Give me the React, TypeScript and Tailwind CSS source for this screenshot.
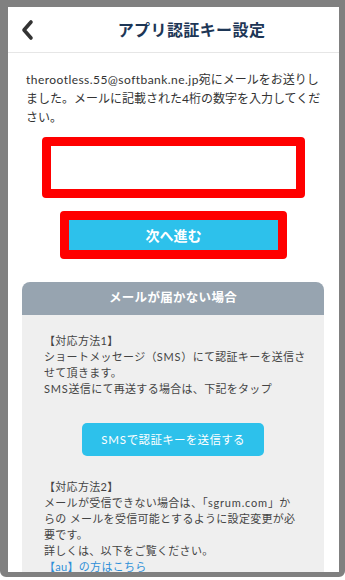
import React from "react";

const font = { fontFamily: '"Lato", "Noto Sans CJK JP", sans-serif' };

export default function App() {
  return (
    <div className="w-[345px] h-[580px] bg-white overflow-hidden" style={font}>
      <div className="h-[577px] border-t-[7px] border-l-[8px] border-r-[6px] border-b-[5px] border-[#808080] rounded-b-[6px] overflow-hidden flex flex-col bg-white">
        <div className="h-[46px] shrink-0 flex items-center border-b border-[#e6e6e6]">
          <div className="w-[38px] flex justify-center">
            <svg width="14" height="22" viewBox="0 0 14 22">
              <path d="M11 3 L4 11 L11 19" fill="none" stroke="#333" strokeWidth="3.6" strokeLinecap="round" strokeLinejoin="round" />
            </svg>
          </div>
          <div className="flex-1 text-center text-[16px] font-bold text-[#1d3656] tracking-[0.4px] pr-[2px]">
            アプリ認証キー設定
          </div>
        </div>
        <div className="flex-1 flex flex-col">
          <div className="pt-[17px] pl-[18px] text-[12px] leading-[19px] text-[#333]">
            <div className="whitespace-nowrap">
              <span className="tracking-[0.45px]">therootless.55@softbank.ne.jp</span>宛にメールをお送りし
            </div>
            <div className="whitespace-nowrap">ました。メールに記載された4桁の数字を入力してくだ</div>
            <div className="whitespace-nowrap">さい。</div>
          </div>
          <div className="mt-[10px] mx-auto w-[263px] h-[61px] border-[9px] border-[#ff0000] rounded-[4px] bg-white" />
          <div className="mt-[13px] mx-auto w-[227px] h-[48px] border-[9px] border-[#ff0000] rounded-[4px]">
            <div className="w-full h-full bg-[#2dc1eb] flex items-center justify-center text-white font-bold text-[14px]">
              次へ進む
            </div>
          </div>
          <div className="mt-[23px] ml-[14px] w-[302px] flex-1 flex flex-col">
            <div className="h-[33px] shrink-0 rounded-t-[8px] bg-[#97a4b0] flex items-center justify-center text-white font-bold text-[12.5px] tracking-[0.3px]">
              メールが届かない場合
            </div>
            <div className="flex-1 bg-[#efefef] px-[22px] pt-[18px] text-[11px] leading-[16px] text-[#444] tracking-[0.3px]">
              <div className="whitespace-nowrap">【対応方法1】</div>
              <div className="whitespace-nowrap">ショートメッセージ（<span className="tracking-[0.8px]">SMS</span>）にて認証キーを送信さ</div>
              <div className="whitespace-nowrap">せて頂きます。</div>
              <div className="whitespace-nowrap"><span className="tracking-[0.8px]">SMS</span>送信にて再送する場合は、下記をタップ</div>
              <div className="mt-[26px] mx-auto w-[182px] h-[33px] rounded-[5px] bg-[#2dc1eb] flex items-center justify-center text-white text-[11.5px] tracking-[0.3px]">
                <span className="tracking-[0.8px]">SMS</span>で認証キーを送信する
              </div>
              <div className="mt-[23px] whitespace-nowrap">【対応方法2】</div>
              <div className="whitespace-nowrap">メールが受信できない場合は、「<span className="tracking-[0.8px]">sgrum.com</span>」か</div>
              <div className="whitespace-nowrap">らの メールを受信可能とするように設定変更が必</div>
              <div className="whitespace-nowrap">要です。</div>
              <div className="whitespace-nowrap">詳しくは、以下をご覧ください。</div>
              <div className="whitespace-nowrap text-[#2f8fd8]">【au】の方はこちら</div>
            </div>
          </div>
        </div>
      </div>
    </div>
  );
}
